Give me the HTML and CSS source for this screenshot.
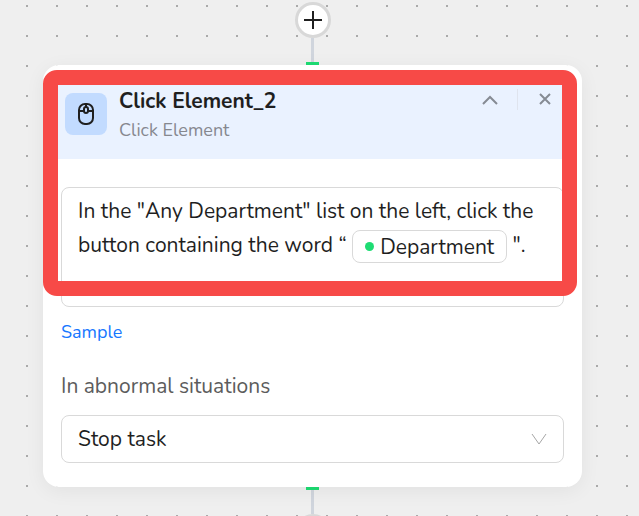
FILE: index.html
```
<!DOCTYPE html>
<html lang="en">
<head>
    <meta charset="UTF-8">
    <meta name="viewport" content="width=device-width, initial-scale=1.0">
    <title>Click Element_2</title>
    <link rel="stylesheet" href="styles.css">
</head>
<body>
    <main class="canvas">
        <div class="connector top">
            <button class="add-btn" type="button" aria-label="Add step">
                <svg width="18" height="18" viewBox="0 0 18 18"><path d="M9 0v18M0 9h18"/></svg>
            </button>
            <span class="line"></span>
            <span class="port"></span>
        </div>

        <section class="card">
            <header class="card-header">
                <div class="card-icon">
                    <svg width="16" height="22" viewBox="0 0 16 22">
                        <rect x="1" y="1" width="14" height="20" rx="6"/>
                        <path d="M1 8h5M10 8h5M8 1v3"/>
                        <rect x="6" y="4" width="4" height="6" rx="2"/>
                    </svg>
                </div>
                <div class="card-title">
                    <h2>Click Element_2</h2>
                    <p>Click Element</p>
                </div>
                <div class="card-actions">
                    <button type="button" aria-label="Collapse">
                        <svg width="16" height="16" viewBox="0 0 16 16"><path d="M1 13l7-7 7 7"/></svg>
                    </button>
                    <span class="divider"></span>
                    <button type="button" aria-label="Close">
                        <svg width="16" height="16" viewBox="0 0 16 16"><path d="M3 3l10 10M13 3L3 13"/></svg>
                    </button>
                </div>
            </header>

            <div class="card-body">
                <div class="editor" role="textbox" aria-multiline="true" aria-label="Instruction" contenteditable="true" spellcheck="false">In the "Any Department" list on the left, click the button containing the word “ <span class="chip" contenteditable="false">Department</span> ".</div>
                <a class="sample" href="#">Sample</a>
                <label for="on-error">In abnormal situations</label>
                <div class="select-box">
                    <select id="on-error">
                        <option>Stop task</option>
                        <option>Skip step</option>
                    </select>
                    <svg width="16" height="12" viewBox="0 0 16 12"><path d="M1 1l7 10 7-10"/></svg>
                </div>
            </div>
            <div class="highlight"></div>
        </section>

        <div class="connector bottom">
            <span class="port"></span>
            <span class="line"></span>
            <button class="add-btn" type="button" aria-label="Add step">
                <svg width="18" height="18" viewBox="0 0 18 18"><path d="M9 0v18M0 9h18"/></svg>
            </button>
        </div>
    </main>
</body>
</html>
```
FILE: styles.css
```
* {
    box-sizing: border-box;
}
body {
    margin: 0;
    font-family: Nunito, Lato, sans-serif;
    font-size: 21px;
    color: #1f1f1f;
}
button, select {
    font: inherit;
    color: inherit;
}
button {
    display: flex;
    align-items: center;
    justify-content: center;
    padding: 0;
    border: none;
    background: none;
    cursor: pointer;
}
svg {
    fill: none;
    stroke: currentColor;
    stroke-width: 2;
}
.canvas {
    height: 100vh;
    overflow: hidden;
    padding: 0 57px 0 43px;
    background-color: #efefef;
    background-image: radial-gradient(circle at 1px 1px, #aaaaaa 1px, transparent 1px);
    background-size: 30px 30px;
    background-position: 26px 5px;
}
.connector {
    display: flex;
    flex-direction: column;
    align-items: center;
}
.connector.top {
    padding-top: 2px;
}
.line {
    width: 3px;
    height: 24px;
    background-color: #d0d5dd;
}
.port {
    width: 13px;
    height: 3px;
    background-color: #1edc73;
}
.add-btn {
    width: 36px;
    height: 36px;
    border: 3px solid #d8d8d8;
    border-radius: 50%;
    background-color: white;
}
.card {
    position: relative;
    padding: 5px;
    border-radius: 16px;
    background-color: white;
    box-shadow: 0 4px 20px rgba(0, 0, 0, 0.06);
}
.card-header {
    display: flex;
    align-items: flex-start;
    gap: 12px;
    height: 89px;
    padding: 16px 24px 0 17px;
    border-radius: 14px 14px 0 0;
    background-color: #eaf2ff;
}
.card-icon {
    display: flex;
    align-items: center;
    justify-content: center;
    width: 42px;
    height: 42px;
    margin-top: 7px;
    border-radius: 8px;
    background-color: #c2dbff;
}
.card-title {
    flex: 1;
}
.card-title h2 {
    margin: 0;
    font-size: 21px;
    line-height: 30px;
}
.card-title p {
    margin: 0;
    font-size: 18px;
    line-height: 28px;
    color: #86888f;
}
.card-actions {
    display: flex;
    align-items: center;
    gap: 19px;
    height: 26px;
    color: #868b94;
}
.divider {
    width: 1px;
    height: 21px;
    background-color: #dfe4ee;
}
.card-body {
    display: flex;
    flex-direction: column;
    align-items: flex-start;
    padding: 28px 13px 19px;
}
.editor {
    width: 100%;
    min-height: 120px;
    padding: 6px 16px;
    border: 1px solid #d9d9d9;
    border-radius: 8px;
    line-height: 34px;
}
.chip {
    display: inline-flex;
    align-items: center;
    gap: 6px;
    height: 33px;
    padding: 0 12px;
    border: 1px solid #d9d9d9;
    border-radius: 8px;
    vertical-align: middle;
}
.chip::before {
    content: '';
    width: 9px;
    height: 9px;
    border-radius: 50%;
    background-color: #1edc73;
}
.sample {
    margin-top: 12px;
    font-size: 18px;
    line-height: 26px;
    color: #1677ff;
    text-decoration: none;
}
.card-body label {
    margin: 25px 0 13px;
    line-height: 32px;
    color: #5c5c5c;
}
.select-box {
    position: relative;
    width: 100%;
}
.select-box select {
    display: block;
    width: 100%;
    height: 48px;
    padding: 0 48px 0 16px;
    border: 1px solid #d9d9d9;
    border-radius: 8px;
    background-color: white;
    appearance: none;
}
.select-box svg {
    position: absolute;
    top: 18px;
    right: 17px;
    stroke-width: 1;
    color: #a6a6a6;
    pointer-events: none;
}
/* marker frame drawn over the header and the instruction */
.highlight {
    position: absolute;
    top: 5px;
    left: 0;
    right: 5px;
    height: 226px;
    border: 15px solid #f74a47;
    border-radius: 14px;
    pointer-events: none;
}
```
